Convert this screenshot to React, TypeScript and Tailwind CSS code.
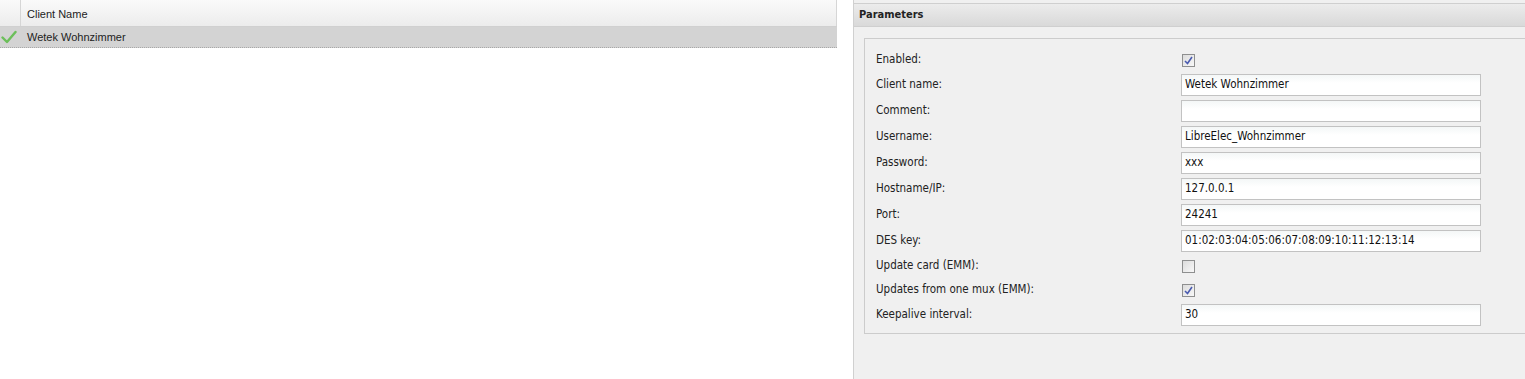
import React from "react";

type Field = {
  label: string;
  kind: "check" | "text";
  value?: string;
  checked?: boolean;
};

const fields: Field[] = [
  { label: "Enabled:", kind: "check", checked: true },
  { label: "Client name:", kind: "text", value: "Wetek Wohnzimmer" },
  { label: "Comment:", kind: "text", value: "" },
  { label: "Username:", kind: "text", value: "LibreElec_Wohnzimmer" },
  { label: "Password:", kind: "text", value: "xxx" },
  { label: "Hostname/IP:", kind: "text", value: "127.0.0.1" },
  { label: "Port:", kind: "text", value: "24241" },
  { label: "DES key:", kind: "text", value: "01:02:03:04:05:06:07:08:09:10:11:12:13:14" },
  { label: "Update card (EMM):", kind: "check", checked: false },
  { label: "Updates from one mux (EMM):", kind: "check", checked: true },
  { label: "Keepalive interval:", kind: "text", value: "30" },
];

function CheckBox({ checked }: { checked?: boolean }) {
  return (
    <div className="flex h-[13px] w-[13px] items-center justify-center border border-[#8e8f8f] bg-gradient-to-br from-[#dcdcdc] to-[#f8f8f8]">
      {checked && (
        <svg width="9" height="9" viewBox="0 0 9 9">
          <path d="M1 5 L3.5 7.5 L8 1" fill="none" stroke="#4a5bb0" strokeWidth="1.6" />
        </svg>
      )}
    </div>
  );
}

function GreenCheck() {
  return (
    <svg width="16" height="14" viewBox="0 0 16 14">
      <path d="M1.5 7.5 L6 12 L14.5 2" fill="none" stroke="#6cbf5a" strokeWidth="2.4" strokeLinecap="round" strokeLinejoin="round" />
    </svg>
  );
}

export default function App() {
  return (
    <div className="flex h-[379px] w-[1525px] bg-white">
      {/* client grid */}
      <div className="w-[837px] shrink-0 font-['Liberation_Sans',Arial,sans-serif] text-[11px] text-[#222]">
        <div className="flex h-[27px] border-b border-[#d0d0d0] bg-gradient-to-b from-[#fafafa] to-[#ececec]">
          <div className="w-[21px] border-r border-[#d6d6d6]" />
          <div className="flex flex-1 items-center border-r border-[#d6d6d6] pl-[6px] pt-[2px]">Client Name</div>
        </div>
        <div className="flex h-[21px] items-center border-b border-dotted border-[#a8a8a8] bg-[#d3d3d3]">
          <div className="flex w-[21px] items-center pl-[1px]">
            <GreenCheck />
          </div>
          <div className="pl-[6px]">Wetek Wohnzimmer</div>
        </div>
      </div>

      <div className="w-[16px] shrink-0" />

      {/* parameters panel */}
      <div className="flex flex-1 flex-col border-l border-[#d0d0d0] bg-[#f0f0f0] pt-[3px] font-['DejaVu_Sans_Condensed','DejaVu_Sans',Tahoma,sans-serif] text-[11.5px] text-[#222]">
        <div className="flex h-[24px] items-center border-t border-b border-[#cfcfcf] bg-gradient-to-b from-[#ececec] to-[#d9d9d9] pl-[5px] pt-[1px] text-[11px] font-bold">
          Parameters
        </div>
        <div className="pl-[10px] pt-[11px]">
          <div className="border-t border-l border-b border-[#cccccc] pb-[5px] pl-[11px] pt-[9px]">
            {fields.map((f) => (
              <div key={f.label} className={`flex items-center ${f.kind === "check" ? "h-[24px]" : "h-[26px]"}`}>
                <div className="w-[305px] shrink-0">{f.label}</div>
                {f.kind === "check" ? (
                  <div className="pl-[1px]">
                    <CheckBox checked={f.checked} />
                  </div>
                ) : (
                  <div className="flex h-[22px] w-[300px] items-center border border-[#c2c2c2] bg-gradient-to-b from-[#f4f7f7] to-white to-40% pl-[3px] text-[#111]">
                    {f.value}
                  </div>
                )}
              </div>
            ))}
          </div>
        </div>
      </div>
    </div>
  );
}
